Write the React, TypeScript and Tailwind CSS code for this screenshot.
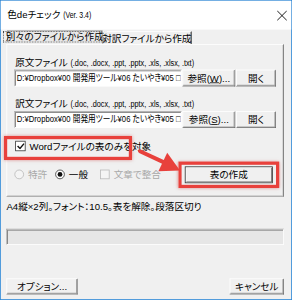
import React from 'react';

// The dialog is laid out at 125% and scaled down to 292x300, so 12px text stays above the browser's minimum size.
const ui = "font-['Liberation_Sans','Noto_Sans_CJK_JP',sans-serif] [font-feature-settings:'palt']";

const raised =
  'border border-t-white border-l-white border-b-[#696969] border-r-[#696969] shadow-[inset_-1px_-1px_0_#a0a0a0] bg-[#f0f0f0]';
const sunken =
  'border border-t-[#a0a0a0] border-l-[#a0a0a0] border-b-white border-r-white shadow-[inset_1px_1px_0_#696969]';

// the dialog font has narrow latin glyphs; squeeze latin runs to match
const Narrow: React.FC<{ children: React.ReactNode; x?: string }> = ({ children, x = 'scale-x-[0.76]' }) => (
  <span className={`inline-block origin-left whitespace-nowrap ${x}`}>{children}</span>
);

const FileRow: React.FC<{ label: string; path: string; browse: React.ReactNode }> = ({ label, path, browse }) => (
  <div className="flex flex-col">
    <div className="h-[16px] leading-[16px] pl-[1px] whitespace-nowrap">
      {label} <Narrow>(.doc, .docx, .ppt, .pptx, .xls, .xlsx, .txt)</Narrow>
    </div>
    <div className="flex mt-[1px] h-[21px]">
      <div className={`${sunken} bg-white w-[210px] h-[21px] leading-[19px] pl-[2px] overflow-hidden whitespace-nowrap`}>
        <Narrow x="scale-x-[0.8]">{path}</Narrow>
      </div>
      <div className={`${raised} ml-[1px] w-[67px] h-[21px] flex items-center justify-center whitespace-nowrap`}>{browse}</div>
      <div className={`${raised} ml-[1px] w-[50px] h-[21px] flex items-center justify-center whitespace-nowrap`}>開く</div>
    </div>
  </div>
);

export default function App() {
  return (
    <div className="w-[292px] h-[300px] overflow-hidden">
      <div className={`w-[365px] h-[375px] scale-[0.8] origin-top-left border border-[#2b87d8] flex flex-col bg-[#f0f0f0] text-[12px] text-black ${ui}`}>
        <div className="h-[36px] bg-white flex items-center justify-between pl-[8px] pr-[5px] shrink-0">
          <span className="leading-none whitespace-nowrap">
            色deチェック <Narrow x="scale-x-[0.72]">(Ver. 3.4)</Narrow>
          </span>
          <svg width="13" height="13" viewBox="0 0 13 13">
            <path d="M0.5 0.5 L12.5 12.5 M12.5 0.5 L0.5 12.5" stroke="#111" strokeWidth="1.2" />
          </svg>
        </div>

        <div className="flex-1 flex flex-col pl-[7px] pr-[9px]">
          {/* tabs */}
          <div className="flex items-end h-[17px] pl-[1px] mt-[1px]">
            <div className="h-[15px] mb-[2px] w-[119px] bg-[#e8e8e8] border border-[#a0a0a0] border-b-[#f0f0f0] flex items-center justify-center leading-none whitespace-nowrap">
              <span className="outline-1 outline-dotted outline-[#444] px-[2px]">別々のファイルから作成</span>
            </div>
            <div className="h-[16px] w-[112px] border-l border-l-[#a0a0a0] border-r-2 border-r-[#696969] border-t border-t-white flex items-center justify-center leading-none whitespace-nowrap">
              対訳ファイルから作成
            </div>
          </div>

          {/* panel */}
          <div className="h-[191px] border border-t-white border-l-white border-b-[#a0a0a0] border-r-[#696969] shadow-[inset_-1px_-1px_0_#c8c8c8] pl-[9px] pr-[9px] pt-[14px] flex flex-col relative">
            <FileRow
              label="原文ファイル"
              path="D:¥Dropbox¥00 開発用ツール¥06 たいやき¥05 □"
              browse={<span>参照(<u>W</u>)...</span>}
            />
            <div className="mt-[14px]">
              <FileRow
                label="訳文ファイル"
                path="D:¥Dropbox¥00 開発用ツール¥06 たいやき¥05 □"
                browse={<span>参照(<u>S</u>)...</span>}
              />
            </div>

            {/* checkbox row */}
            <div className="relative mt-[10px] h-[25px] flex items-center pl-[1px]">
              <div className="absolute left-[-13px] top-[0px] w-[160px] h-[30px] border-[4px] border-[#e8413c] shadow-[0_0_4px_rgba(200,40,40,0.5)]" />
              <div className="w-[13px] h-[13px] bg-white border border-[#333] flex items-center justify-center">
                <svg width="10" height="9" viewBox="0 0 10 9">
                  <path d="M1 4.5 L4 7.5 L9 1.5" fill="none" stroke="#111" strokeWidth="1.8" />
                </svg>
              </div>
              <span className="ml-[5px] leading-none whitespace-nowrap">Wordファイルの表のみを対象</span>
            </div>

            {/* options row */}
            <div className="flex items-center mt-[8px] h-[30px] whitespace-nowrap">
              <div className="flex items-center text-[#a8a8a8]">
                <span className="w-[12px] h-[12px] rounded-full border border-[#b8b8b8] bg-[#f4f4f4]" />
                <span className="ml-[5px]">特許</span>
              </div>
              <div className="flex items-center ml-[10px]">
                <span className="w-[12px] h-[12px] rounded-full border border-[#333] bg-white flex items-center justify-center">
                  <span className="w-[6px] h-[6px] rounded-full bg-[#111]" />
                </span>
                <span className="ml-[5px]">一般</span>
              </div>
              <div className="flex items-center text-[#a8a8a8] ml-[15px]">
                <span className="w-[12px] h-[12px] border border-[#b8b8b8] bg-[#f4f4f4]" />
                <span className="ml-[5px]">文章で整合</span>
              </div>
              <div className="ml-auto relative mr-[4px]">
                <div className="absolute left-[-8px] top-[-6px] w-[126px] h-[33px] border-[4px] border-[#e8413c] shadow-[0_0_4px_rgba(200,40,40,0.5)]" />
                <div className="w-[110px] h-[21px] border border-[#333] bg-[#f0f0f0] shadow-[inset_1px_1px_0_#fff,inset_-1px_-1px_0_#696969] flex items-center justify-center">
                  表の作成
                </div>
              </div>
            </div>

            {/* arrow */}
            <svg className="absolute left-[160px] top-[128px]" width="70" height="45" viewBox="0 0 70 45">
              <path d="M6 5 L36 19" stroke="#e8413c" strokeWidth="5" strokeLinecap="round" />
              <polygon points="56,29 40,7 29,30" fill="#e8413c" />
            </svg>
          </div>

          <div className="mt-[5px] leading-[16px] whitespace-nowrap">A4縦×2列。フォント：10.5。表を解除。段落区切り</div>

          <div className={`${sunken} mt-[19px] h-[20px] bg-[#e6e6e6]`} />

          <div className="mt-auto mb-[6px] flex justify-between">
            <div className={`${raised} w-[89px] h-[20px] flex items-center justify-center whitespace-nowrap`}>オプション...</div>
            <div className={`${raised} w-[68px] h-[20px] flex items-center justify-center whitespace-nowrap`}>キャンセル</div>
          </div>
        </div>
      </div>
    </div>
  );
}
